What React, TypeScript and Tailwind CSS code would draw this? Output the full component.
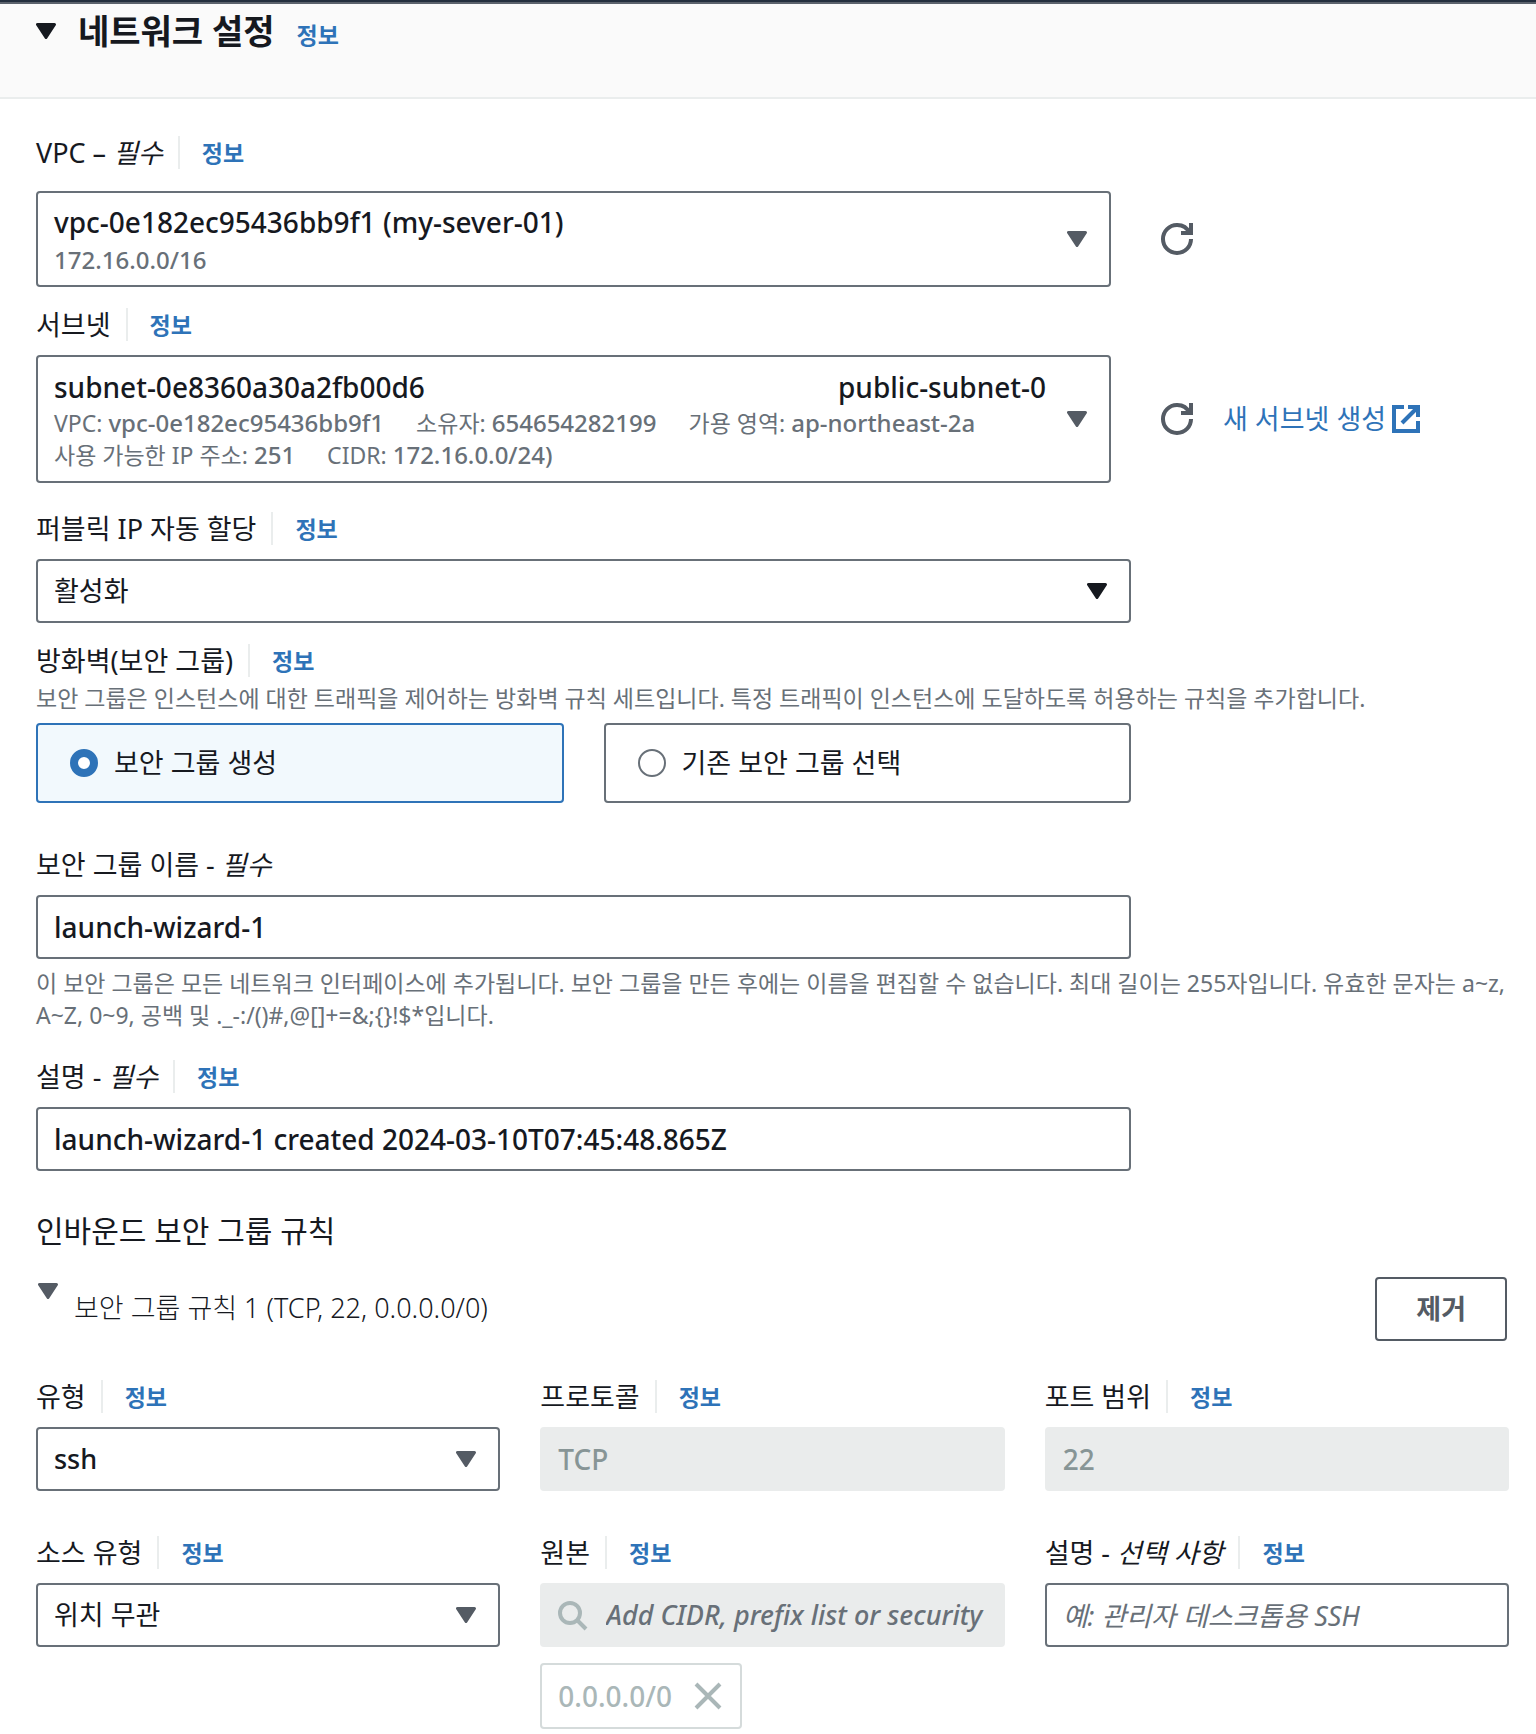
import type { ReactNode } from "react";

const FIELD = "h-16 w-full rounded-[4px] border-2 px-4 outline-none";
const FIELD_ON = "border-[#687078] bg-white text-[#16191f]";
const FIELD_OFF = "border-[#eaecec] bg-[#eaecec] text-[#879596]";
const LATIN = "text-[28px] font-medium";
const HINT = "text-[23px] leading-8 text-[#687078]";

const SG_NAME_HINT =
  "이 보안 그룹은 모든 네트워크 인터페이스에 추가됩니다. 보안 그룹을 만든 후에는 이름을 편집할 수 없습니다. 최대 길이는 255자입니다. 유효한 문자는 a~z, A~Z, 0~9, 공백 및 ._-:/()#,@[]+=&;{}!$*입니다.";

function Caret({ className = "" }: { className?: string }) {
  return (
    <svg viewBox="0 0 20 16" className={`h-4 w-5 shrink-0 ${className}`} aria-hidden="true">
      <path d="M1.500 1.500h17L10 14.500z" fill="currentColor" stroke="currentColor" strokeWidth="3" strokeLinejoin="round" />
    </svg>
  );
}

function RefreshIcon() {
  return (
    <svg viewBox="0 0 16 16" className="size-8" fill="none" stroke="currentColor" strokeWidth="2" aria-hidden="true">
      <path d="M10 5h5V0" />
      <path d="M15 8a6.957 6.957 0 0 1-7 7 6.957 6.957 0 0 1-7-7 6.957 6.957 0 0 1 7-7 6.870 6.870 0 0 1 6.300 4" />
    </svg>
  );
}

function ExternalIcon() {
  return (
    <svg viewBox="0 0 16 16" className="size-8" fill="none" stroke="currentColor" strokeWidth="2" aria-hidden="true">
      <path d="M14 9v5H2V2h5" />
      <path d="M9 2h5v5" />
      <path d="M6 10l8-8" />
    </svg>
  );
}

function SearchIcon() {
  return (
    <svg viewBox="0 0 16 16" className="size-8 shrink-0" fill="none" stroke="currentColor" strokeWidth="2" aria-hidden="true">
      <circle cx="7" cy="7" r="5" />
      <path d="M15 15l-4.500-4.500" />
    </svg>
  );
}

function CloseIcon() {
  return (
    <svg viewBox="0 0 16 16" className="size-8" fill="none" stroke="currentColor" strokeWidth="2" aria-hidden="true">
      <path d="M2 2l12 12M14 2L2 14" />
    </svg>
  );
}

function InfoLink() {
  return (
    <a href="#info" className="text-[23px] font-bold text-[#2e73b8]">
      정보
    </a>
  );
}

interface LabelRowProps {
  htmlFor?: string;
  id?: string;
  info?: boolean;
  children: ReactNode;
}

function LabelRow({ htmlFor, id, info = true, children }: LabelRowProps) {
  return (
    <div className="flex h-[33px] items-center leading-[33px]">
      {htmlFor ? (
        <label htmlFor={htmlFor} id={id}>
          {children}
        </label>
      ) : (
        <span id={id}>{children}</span>
      )}
      {info && (
        <span className="ml-[15px] flex h-full items-center border-l-2 border-[#eaeded] pt-0.5 pl-[22px]">
          <InfoLink />
        </span>
      )}
    </div>
  );
}

interface SelectProps {
  id: string;
  value: string;
  caret?: string;
}

function Select({ id, value, caret = "text-[#545b64]" }: SelectProps) {
  return (
    <div className="relative">
      <select id={id} className={`${FIELD} ${FIELD_ON} appearance-none`}>
        <option>{value}</option>
      </select>
      <Caret className={`pointer-events-none absolute top-6 right-6 ${caret}`} />
    </div>
  );
}

function Meta({ label, value }: { label?: string; value: string }) {
  return (
    <span>
      {label && `${label}: `}
      <span className="text-[24px] font-medium">{value}</span>
    </span>
  );
}

function RadioCard({ label, checked }: { label: string; checked?: boolean }) {
  return (
    <label className="flex h-20 flex-1 items-center gap-4 rounded-[4px] border-2 border-[#687078] bg-white px-8 has-checked:border-[#2e73b8] has-checked:bg-[#f2f9fd]">
      <input
        type="radio"
        name="security-group"
        defaultChecked={checked}
        className="size-7 appearance-none rounded-full border-2 border-[#687078] bg-white checked:border-[8px] checked:border-[#2e73b8]"
      />
      {label}
    </label>
  );
}

export default function App() {
  return (
    <main className="min-h-screen bg-white font-['Noto_Sans','Noto_Sans_CJK_KR',sans-serif] text-[27px] text-[#16191f]">
      <header className="h-[99px] border-t-2 border-b-2 border-t-[#232f3e] border-b-[#eaeded] bg-[#fafafa]">
        <div className="flex h-[56px] items-center border-t-2 border-[#5b626c] pl-9">
          <button type="button" aria-label="네트워크 설정 접기">
            <Caret />
          </button>
          <div className="ml-[22px] flex items-baseline gap-[22px]">
            <h2 className="text-[34px] leading-[54px] font-bold">네트워크 설정</h2>
            <InfoLink />
          </div>
        </div>
      </header>

      <div className="pt-[37px] pr-[27px] pb-1 pl-9">
        <section>
          <LabelRow id="vpc-label">
            VPC – <em>필수</em>
          </LabelRow>
          <div className="mt-[22px] flex items-center">
            <button
              type="button"
              aria-haspopup="listbox"
              aria-labelledby="vpc-label"
              className="flex h-24 w-[1075px] items-center justify-between rounded-[4px] border-2 border-[#687078] pr-[22px] pl-4 text-left"
            >
              <span className="pt-0.5">
                <span className={`block leading-10 ${LATIN}`}>vpc-0e182ec95436bb9f1 (my-sever-01)</span>
                <span className="block text-[23px] leading-9 text-[#687078]">
                  <Meta value="172.16.0.0/16" />
                </span>
              </span>
              <Caret className="text-[#545b64]" />
            </button>
            <button type="button" aria-label="VPC 새로 고침" className="ml-[50px] text-[#545b64]">
              <RefreshIcon />
            </button>
          </div>
        </section>

        <section className="mt-[21px]">
          <LabelRow id="subnet-label">서브넷</LabelRow>
          <div className="mt-[14px] flex items-center">
            <button
              type="button"
              aria-haspopup="listbox"
              aria-labelledby="subnet-label"
              className="flex h-32 w-[1075px] items-center justify-between rounded-[4px] border-2 border-[#687078] pr-[22px] pl-4 text-left"
            >
              <span className="w-[992px]">
                <span className={`flex justify-between leading-10 ${LATIN}`}>
                  <span>subnet-0e8360a30a2fb00d6</span>
                  <span>public-subnet-0</span>
                </span>
                <span className={`flex flex-wrap gap-x-8 ${HINT}`}>
                  <Meta label="VPC" value="vpc-0e182ec95436bb9f1" />
                  <Meta label="소유자" value="654654282199" />
                  <Meta label="가용 영역" value="ap-northeast-2a" />
                  <Meta label="사용 가능한 IP 주소" value="251" />
                  <Meta label="CIDR" value="172.16.0.0/24)" />
                </span>
              </span>
              <Caret className="text-[#545b64]" />
            </button>
            <button type="button" aria-label="서브넷 새로 고침" className="ml-[50px] text-[#545b64]">
              <RefreshIcon />
            </button>
            <a href="#create-subnet" className="ml-[30px] flex items-center gap-1 text-[#2e73b8]">
              새 서브넷 생성
              <ExternalIcon />
            </a>
          </div>
        </section>

        <section className="mt-[29px] w-[1095px]">
          <LabelRow htmlFor="public-ip">퍼블릭 IP 자동 할당</LabelRow>
          <div className="mt-[14px]">
            <Select id="public-ip" value="활성화" caret="text-[#16191f]" />
          </div>
        </section>

        <section className="mt-[21px]" role="radiogroup" aria-labelledby="firewall-label">
          <LabelRow id="firewall-label">방화벽(보안 그룹)</LabelRow>
          <p className={`mt-[5px] ${HINT}`}>
            보안 그룹은 인스턴스에 대한 트래픽을 제어하는 방화벽 규칙 세트입니다. 특정 트래픽이 인스턴스에 도달하도록 허용하는 규칙을 추가합니다.
          </p>
          <div className="mt-[9px] flex w-[1095px] gap-10">
            <RadioCard label="보안 그룹 생성" checked />
            <RadioCard label="기존 보안 그룹 선택" />
          </div>
        </section>

        <section className="mt-[45px]">
          <LabelRow htmlFor="sg-name" info={false}>
            보안 그룹 이름 - <em>필수</em>
          </LabelRow>
          <input
            id="sg-name"
            defaultValue="launch-wizard-1"
            className={`mt-[14px] max-w-[1095px] ${LATIN} ${FIELD} ${FIELD_ON}`}
          />
          <p className={`mt-2 ${HINT}`}>{SG_NAME_HINT}</p>
        </section>

        <section className="mt-[29px]">
          <LabelRow htmlFor="sg-desc">
            설명 - <em>필수</em>
          </LabelRow>
          <input
            id="sg-desc"
            defaultValue="launch-wizard-1 created 2024-03-10T07:45:48.865Z"
            className={`mt-[14px] max-w-[1095px] ${LATIN} ${FIELD} ${FIELD_ON}`}
          />
        </section>

        <h3 className="mt-10 text-[30px] leading-10">인바운드 보안 그룹 규칙</h3>

        <div className="mt-[26px] flex items-start">
          <button type="button" className="flex items-start gap-4 pt-1.5 pl-0.5 font-light">
            <Caret className="text-[#545b64]" />
            <span className="pt-2 leading-[34px]">보안 그룹 규칙 1 (TCP, 22, 0.0.0.0/0)</span>
          </button>
          <button
            type="button"
            className="mr-[2px] ml-auto h-16 rounded-[4px] border-2 border-[#545b64] px-[39px] font-bold text-[#545b64]"
          >
            제거
          </button>
        </div>

        <div className="mt-[39px] grid grid-cols-3 gap-x-10 gap-y-[45px]">
          <div>
            <LabelRow htmlFor="type">유형</LabelRow>
            <div className="mt-[14px] font-medium">
              <Select id="type" value="ssh" />
            </div>
          </div>
          <div>
            <LabelRow htmlFor="protocol">프로토콜</LabelRow>
            <input id="protocol" disabled value="TCP" className={`mt-[14px] ${LATIN} ${FIELD} ${FIELD_OFF}`} />
          </div>
          <div>
            <LabelRow htmlFor="port">포트 범위</LabelRow>
            <input id="port" disabled value="22" className={`mt-[14px] ${LATIN} ${FIELD} ${FIELD_OFF}`} />
          </div>
          <div>
            <LabelRow htmlFor="source-type">소스 유형</LabelRow>
            <div className="mt-[14px]">
              <Select id="source-type" value="위치 무관" />
            </div>
          </div>
          <div>
            <LabelRow htmlFor="source">원본</LabelRow>
            <div className="mt-[14px] flex h-16 items-center gap-[18px] rounded-[4px] bg-[#eaecec] px-4 text-[#aab7b8]">
              <SearchIcon />
              <input
                id="source"
                disabled
                placeholder="Add CIDR, prefix list or security"
                className="min-w-0 flex-1 font-medium outline-none placeholder:text-[#687078] placeholder:italic"
              />
            </div>
            <div
              className={`mt-4 flex h-[66px] w-fit items-center gap-5 rounded-[4px] border-2 border-[#d5dbdb] px-4 text-[#aab7b8] ${LATIN}`}
            >
              0.0.0.0/0
              <button type="button" disabled aria-label="0.0.0.0/0 제거">
                <CloseIcon />
              </button>
            </div>
          </div>
          <div>
            <LabelRow htmlFor="rule-desc">
              설명 - <em>선택 사항</em>
            </LabelRow>
            <input
              id="rule-desc"
              placeholder="예: 관리자 데스크톱용 SSH"
              className={`mt-[14px] ${FIELD} ${FIELD_ON} placeholder:text-[#687078] placeholder:italic`}
            />
          </div>
        </div>
      </div>
    </main>
  );
}
